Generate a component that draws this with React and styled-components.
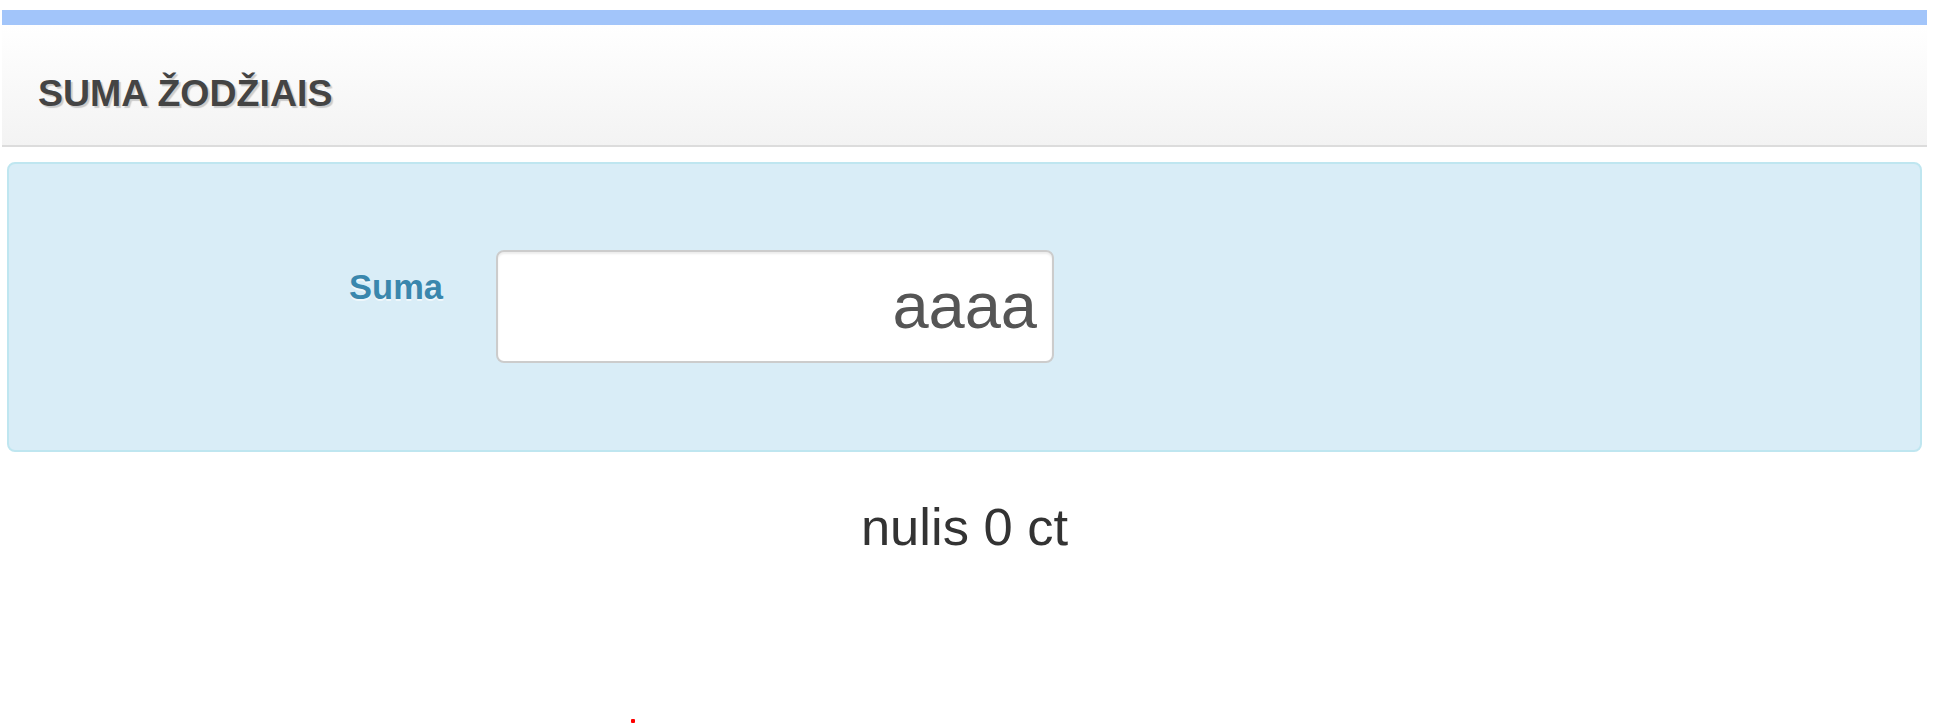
import React from 'react';
import styled, { createGlobalStyle } from 'styled-components';

const GlobalStyle = createGlobalStyle`
  body {
    margin: 0;
    background: #fff;
    font-family: "Liberation Sans", Arial, sans-serif;
  }
`;

const Page = styled.div`
  margin: 10px 17px 0 2px;
`;

const TopBar = styled.div`
  height: 15px;
  background: #a2c5fa;
`;

const Header = styled.div`
  box-sizing: border-box;
  height: 122px;
  padding: 48px 0 0 36px;
  background: linear-gradient(to bottom, #ffffff, #f3f3f3);
  border-bottom: 2px solid #dcdcdc;
`;

const Title = styled.h1`
  margin: 0;
  font-size: 37.5px;
  line-height: 40px;
  font-weight: bold;
  color: #444;
  text-shadow: 2px 2px 1px rgba(0, 0, 0, 0.18);
`;

const Alert = styled.div`
  margin: 15px 5px 0;
  padding: 86px 0 87px;
  background: #d9edf7;
  border: 2px solid #bfe6f0;
  border-radius: 8px;
`;

const FormRow = styled.div`
  display: flex;
  align-items: flex-start;
  gap: 53px;
`;

const Label = styled.label`
  width: 434px;
  padding-top: 17px;
  text-align: right;
  font-size: 34.5px;
  line-height: 40px;
  font-weight: bold;
  color: #3a87ad;
  text-shadow: 0 2px 0 rgba(255, 255, 255, 0.6);
`;

const AmountInput = styled.input`
  box-sizing: border-box;
  width: 558px;
  height: 113px;
  padding: 0 15px 2px;
  border: 2px solid #cccccc;
  border-radius: 8px;
  background: #fff;
  box-shadow: inset 0 2px 2px rgba(0, 0, 0, 0.075);
  font-family: "Liberation Sans", Arial, sans-serif;
  font-size: 65px;
  color: #555;
  text-align: right;
  outline: none;
`;

const Result = styled.div`
  margin-top: 45px;
  text-align: center;
  font-size: 52.5px;
  line-height: 60px;
  color: #333;
`;

const ErrorMark = styled.div`
  width: 4px;
  height: 4px;
  margin: 162px 0 0 629px;
  background: #f00;
  border-radius: 1px;
`;

export default function App() {
  return (
    <>
      <GlobalStyle />
      <Page>
        <TopBar />
        <Header>
          <Title>SUMA ŽODŽIAIS</Title>
        </Header>
        <Alert>
          <FormRow>
            <Label htmlFor="suma">Suma</Label>
            <AmountInput id="suma" defaultValue="aaaa" />
          </FormRow>
        </Alert>
        <Result>nulis 0 ct</Result>
        <ErrorMark />
      </Page>
    </>
  );
}
